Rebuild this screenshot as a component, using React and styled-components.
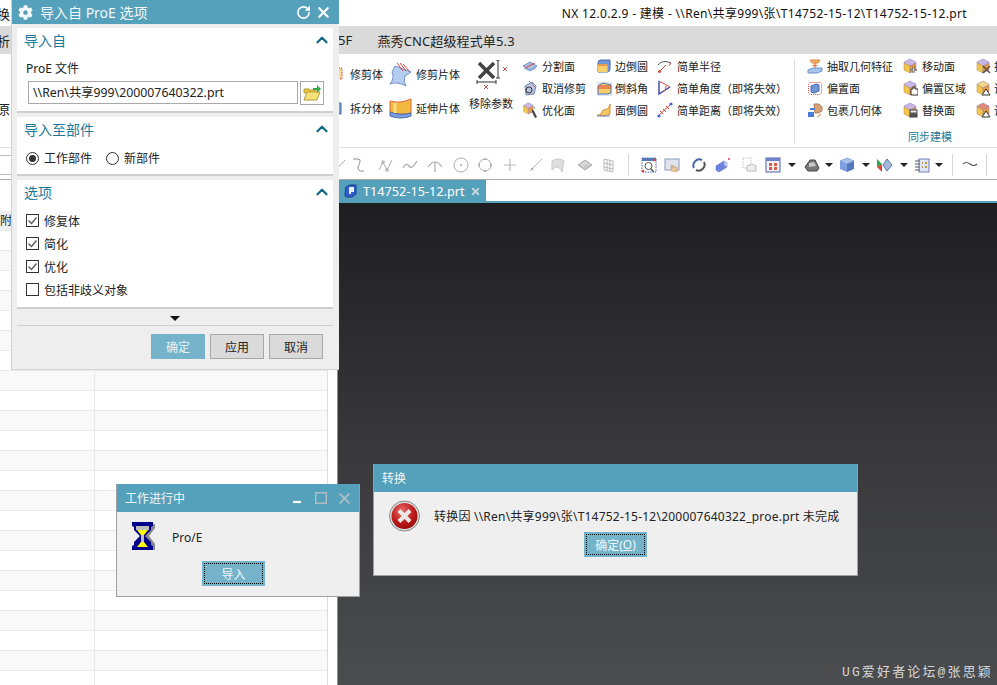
import React from "react";
import styled, { createGlobalStyle } from "styled-components";
import { ChevronUp, RotateCw, X } from "lucide-react";
import { FaCog } from "react-icons/fa";

const Global = createGlobalStyle`
  html, body { margin: 0; padding: 0; overflow: hidden; background: #fff; }
  * { box-sizing: border-box; }
  body { font-family: "Noto Sans", "Noto Sans CJK SC", sans-serif; color: #222; font-size: 12px; }
`;

const Screen = styled.div`
  position: relative; width: 997px; height: 685px; overflow: hidden; background: #fff;
  display: flex; flex-direction: column;
`;
const TitleBar = styled.div`
  height: 26px; display: flex; justify-content: space-between; align-items: center;
  padding-right: 30px; font-size: 12px; color: #111; white-space: nowrap; letter-spacing: .33px;
`;
const EdgeText = styled.span`margin-left: -3px; font-size: 13px;`;
const MenuBar = styled.div`
  height: 28px; background: #dadada; display: flex; align-items: center; font-size: 13px; white-space: nowrap;
`;
const MenuItem = styled.span`margin-left: ${p => p.$gap}px; letter-spacing: .12px;`;

const Ribbon = styled.div`
  height: 94px; display: flex; border-bottom: 1px solid #e0e0e0; font-size: 11px; white-space: nowrap; overflow: hidden;
`;
const RibbonColumn = styled.div`
  width: ${p => p.$w}px; flex: none; display: flex; flex-direction: column; padding-top: ${p => p.$top ?? 1}px;
`;
const RibbonItem = styled.div`
  height: ${p => p.$h ?? 22}px; display: flex; align-items: center; gap: ${p => p.$gap ?? 4}px; color: #222;
`;
const LargeTool = styled.div`
  width: 53px; flex: none; display: flex; flex-direction: column; align-items: flex-start; padding-top: 6px; gap: 5px;
`;
const LargeGlyph = styled.div`padding-left: 7px;`;
const SyncGroup = styled.div`
  flex: none; margin-top: 5px; height: 84px; border-left: 1px solid #dcdcdc; padding-left: 12px;
  display: flex; flex-direction: column;
`;
const SyncColumns = styled.div`display: flex; margin-top: -5px;`;
const GroupLabel = styled.div`
  color: #1b7a9c; font-size: 11px; padding-left: 101px; margin-top: 7px;
`;

const Toolbar = styled.div`
  height: 32px; display: flex; align-items: center; border-bottom: 1px solid #a8a8a8; padding-top: 2px;
`;
const EdgeCombo = styled.div`
  width: 11px; height: 20px; flex: none; border-top: 1px solid #bbb; border-bottom: 1px solid #bbb;
`;
const ToolIcon = styled.span`
  margin-left: ${p => p.$gap}px; width: 16px; height: 16px; flex: none; display: block; opacity: ${p => p.$dim ? 0.8 : 1};
`;
const ToolSep = styled.span`
  margin-left: ${p => p.$gap}px; width: 1px; height: 22px; flex: none; background: #d8d8d8;
`;
const DropArrow = styled.span`
  margin-left: ${p => p.$gap}px; flex: none; width: 8px; height: 4px;
  border-left: 4px solid transparent; border-right: 4px solid transparent; border-top: 4px solid #222;
`;

const Workspace = styled.div`flex: 1; display: flex; min-height: 0;`;
const LeftPane = styled.div`
  width: 338px; flex: none; border-right: 1px solid #8f8f8f; padding-top: 31px; overflow: hidden;
`;
const Table = styled.div`width: 328px; border-right: 1px solid #ddd;`;
const Row = styled.div`
  height: 20px; display: grid; grid-template-columns: 95px 1fr; border-bottom: 1px solid #e9e9e9;
  background: ${p => p.$head ? "#efefef" : p.$alt ? "#f9f9f9" : "#fff"};
`;
const Cell = styled.div`
  border-right: 1px solid #e9e9e9; font-size: 12px; line-height: 19px;
  &:last-child { border-right: 0; }
`;
const ViewColumn = styled.div`flex: 1; display: flex; flex-direction: column; min-width: 0;`;
const TabStrip = styled.div`height: 23px; display: flex; border-bottom: 2px solid #55a0ba;`;
const DocTab = styled.div`
  width: 148px; height: 22px; background: #55a0ba; color: #fff; display: flex; align-items: center;
  padding-left: 6px; font-size: 12.7px; gap: 5px; white-space: nowrap;
`;
const TabClose = styled(X)`color: #c4d8df;`;
const Viewport = styled.div`
  position: relative; flex: 1;
  background: linear-gradient(180deg, #1e1e20 0%, #39393b 52%, #4b4c4e 100%);
`;
const Watermark = styled.div`
  position: absolute; right: 4px; bottom: 5px; color: #d6d6d6; font-size: 13px; letter-spacing: 2.15px;
  font-family: "Liberation Mono", "Noto Sans CJK SC", monospace; white-space: nowrap;
`;

const OptionsDialog = styled.div`
  position: absolute; left: 11px; top: 0; width: 328px; height: 370px; background: #eee;
  border-bottom: 1px solid #d4d4d4; border-left: 1px solid #d4d4d4; display: flex; flex-direction: column;
`;
const TealHeader = styled.div`
  height: ${p => p.$h}px; flex: none; background: #55a0ba; color: #f2f8fa; display: flex; align-items: center;
  font-size: ${p => p.$size}px; padding: 0 ${p => p.$pr ?? 8}px 0 ${p => p.$pl}px; white-space: nowrap;
`;
const HeaderTitle = styled.span`margin-left: ${p => p.$gap ?? 0}px; flex: 1;`;
const HeaderBtn = styled.span`
  display: flex; margin-left: ${p => p.$gap ?? 0}px; color: ${p => p.$color ?? "#fff"};
`;
const DialogBody = styled.div`padding: 4px 6px 0 5px; display: flex; flex-direction: column; gap: 4px;`;
const Panel = styled.section`
  height: ${p => p.$h}px; background: #fff; border-bottom: 2px solid #cfcfcf; padding: 0 9px;
`;
const PanelHead = styled.div`
  height: 26px; margin: 0 -9px 0 -2px; padding: 0 2px 2px 0; display: flex; align-items: center; justify-content: space-between;
  color: #1b7a9c; font-size: 14px;
`;
const FieldLabel = styled.div`height: 16px; line-height: 16px; margin-top: 7px; font-size: 12px;`;
const FileRow = styled.div`display: flex; gap: 2px; margin: 4px 0 0 2px;`;
const FileInput = styled.div`
  width: 270px; height: 23px; border: 1px solid #a8a8a8; padding-left: 4px; line-height: 21px; font-size: 12.3px; white-space: nowrap;
`;
const BrowseBtn = styled.div`
  width: 24px; height: 24px; border: 1px solid #a8a8a8; display: flex; align-items: center; justify-content: center;
`;
const RadioRow = styled.div`display: flex; align-items: center; margin-top: 7px; height: 16px;`;
const Radio = styled.span`
  width: 13px; height: 13px; border: 1px solid #333; border-radius: 50%; flex: none; margin-left: ${p => p.$gap ?? 0}px;
  display: flex; align-items: center; justify-content: center;
  &::after { content: ""; width: 7px; height: 7px; border-radius: 50%; background: ${p => p.$on ? "#333" : "transparent"}; }
`;
const OptionLabel = styled.span`margin-left: 5px; font-size: 12px;`;
const CheckList = styled.div`margin-top: 3px;`;
const CheckRow = styled.div`height: 23px; display: flex; align-items: center;`;
const CheckBox = styled.span`
  width: 13px; height: 13px; border: 1px solid #333; flex: none; display: flex; align-items: center; justify-content: center;
`;
const ExpandRow = styled.div`
  height: 17px; margin: -4px 0 0; display: flex; align-items: center; justify-content: center;
  border-bottom: 1px solid #cfcfcf; padding-top: 2px;
  &::before { content: ""; width: 0; height: 0; border-left: 5px solid transparent; border-right: 5px solid transparent; border-top: 5px solid #111; }
`;
const Buttons = styled.div`display: flex; justify-content: flex-end; gap: 5px; padding: 4px 10px 0 0;`;
const Btn = styled.div`
  width: 54px; height: 25px; display: flex; align-items: center; justify-content: center; font-size: 12px;
  background: ${p => p.$primary ? "#74b3c9" : "#dadada"};
  color: ${p => p.$primary ? "#e6f3f7" : "#222"};
  border: ${p => p.$primary ? "0" : "1px solid #a8a8a8"};
`;

const MessageWindow = styled.div`
  position: absolute; left: ${p => p.$x}px; top: ${p => p.$y}px; width: ${p => p.$w}px; height: ${p => p.$h}px;
  background: #efefef; border: 1px solid #a0a0a0; border-top: 0; display: flex; flex-direction: column;
`;
const MessageRow = styled.div`
  display: flex; align-items: center; gap: ${p => p.$gap}px; padding: ${p => p.$top}px 0 0 ${p => p.$left}px; font-size: 12px; white-space: nowrap;
`;
const MessageText = styled.span`letter-spacing: ${p => p.$track ?? 0}px;`;
const FocusBtn = styled.div`
  width: 63px; height: 25px; background: #74b3c9; color: #eef7fa; font-size: 12px; display: flex; align-items: center; justify-content: center;
  outline: 1px dotted #000; outline-offset: -3px; margin: ${p => p.$mt}px 0 0 ${p => p.$ml}px; ${p => p.$center && "align-self: center; margin-left: 0;"}
`;
const Underlined = styled.span`text-decoration: underline;`;
const Glyph = styled.svg`display: block; flex: none;`;

const Svg = ({ s = 16, w, h, vb = "0 0 16 16", children }) => (
  <Glyph width={w ?? s} height={h ?? s} viewBox={vb} fill="none">{children}</Glyph>
);

const Cube = ({ t = "#c9b8e6", l = "#f3c64e", r = "#e89a3c" }) => (
  <>
    <path d="M8 1l6 3v1L8 8 2 5V4z" fill={t} stroke="#8f78b8" strokeWidth=".5" />
    <path d="M2 5l6 3v7l-6-3z" fill={l} stroke="#b8863a" strokeWidth=".5" />
    <path d="M14 5L8 8v7l6-3z" fill={r} stroke="#8f78b8" strokeWidth=".5" />
  </>
);

const glyphs = {
  split: <><path d="M1 8l7-4 7 4-7 4z" fill="#a9bfe4" stroke="#6f8fc8" /><path d="M2 10l6 3 6-3" stroke="#7d97cc" /><path d="M3 10L13 5" stroke="#e0453a" /></>,
  untrim: <><path d="M3 6l7-4 4 4-2 8-8 1z" fill="#b9c6e0" stroke="#6f86b8" /><path d="M7 1l6 6" stroke="#d9453a" strokeDasharray="1.5 1" /><circle cx="7" cy="10" r="3" stroke="#333" /></>,
  optimize: <><g transform="scale(.8)"><Cube /></g><path d="M10 7l2 2 3 6-2 1-3-6z" fill="#444" /><path d="M12 5l1 2" stroke="#999" /></>,
  edgeBlend: <><path d="M2 5q0-3 3-3h9v9q0 3-3 3H2z" fill="#6f97d8" stroke="#4a68a8" /><path d="M2 6h10v8H2z" fill="#f4cf6a" /><path d="M2 7h10" stroke="#e0603a" /><path d="M12 5v9" stroke="#7da0da" /></>,
  chamfer: <><rect x="1" y="2" width="15" height="14" fill="#dfe6f3" /><path d="M2 6l5-3 8 2v8l-4 1H2z" fill="#f4cf6a" stroke="#5577b5" /><path d="M2 6h13M2 8h13" stroke="#d9453a" /></>,
  faceBlend: <><path d="M1 13l8 1 5-2V2q-1 6-7 6l-3 5z" fill="#f3c864" stroke="#d98a3a" /><path d="M1 14h13" stroke="#6f8fc8" /></>,
  radius: <><path d="M1 7Q6 1 14 5" stroke="#555" /><path d="M2 14l7-7" stroke="#d9453a" /><circle cx="2.5" cy="13.5" r="1.5" fill="#d9453a" /><path d="M14 5l-2 3" stroke="#d9453a" /></>,
  angle: <><path d="M2 1v13L13 7" stroke="#3a3fa8" strokeWidth="1.4" /><path d="M7 11q2-1 2-5" stroke="#d9453a" /><path d="M2 1l11 6" stroke="#d9453a" /></>,
  distance: <><path d="M1 14L14 2" stroke="#d9453a" /><path d="M3 9l3 3M6 7l3 3M9 4l3 3" stroke="#d9453a" /><circle cx="2" cy="14" r="1.6" fill="#4a68c8" /><circle cx="14" cy="2" r="1.6" fill="#4a68c8" /></>,
  extract: <><path d="M3 2h10l-2 3H5z" fill="#f2b267" stroke="#d98a3a" /><path d="M8 5v5M5.5 7.5h5" stroke="#e0603a" /><path d="M1 12l5-2h9v3l-5 2H1z" fill="#a9c4ea" stroke="#6f8fc8" /></>,
  offset: <><rect x="1.5" y="2.5" width="13" height="12" rx="2" stroke="#d9453a" strokeDasharray="1 1" /><path d="M4 6l5-2 3 1v6l-5 2-3-1z" fill="#6f97d8" stroke="#4a68a8" /></>,
  wrap: <><path d="M7 2h5l3 3v4l-4 2H8z" fill="#d8a178" stroke="#b8785a" /><path d="M1 10h6v5H1z" fill="#4d7bd8" /><path d="M3 7h5" stroke="#4d7bd8" strokeWidth="2" /><path d="M10 15l4-3" stroke="#e0763a" /></>,
  move: <><Cube /><path d="M8 12h7M11.5 8v7" stroke="#555" strokeWidth="2" /><path d="M8 12h7M11.5 8v7" stroke="#eee" strokeWidth=".7" /></>,
  region: <><Cube /><path d="M9 15V9h2V7h2v2h3v6z" fill="#fff" stroke="#333" /></>,
  replace: <><Cube /><rect x="8" y="8" width="7" height="3" fill="#eee" stroke="#444" /><rect x="8" y="12" width="7" height="3" fill="#555" stroke="#444" /></>,
  sync1: <><Cube /><path d="M8 8l7 7M15 8l-7 7" stroke="#555" strokeWidth="1.5" /></>,
  sync2: <><Cube t="#f2d780" /><path d="M11 9l4 6H7z" fill="#fff" stroke="#333" /></>,
  sync3: <><Cube t="#e08a7a" /><path d="M11 9l4 6H7z" fill="#fff" stroke="#333" /></>,
  trim: <><rect x="1" y="2" width="11" height="11" fill="#f7dc98" stroke="#d9453a" strokeDasharray="1.5 1" /></>,
  splitBody: <><path d="M1 3h10v11H5q-4 0-4-4z" fill="#7c9ee2" stroke="#4a68a8" /></>,
  c1: <path d="M3 14L13 3" stroke="#999" />,
  c2: <path d="M3 2h5q3 0 2 3T8 10t2 4h4" stroke="#777" />,
  c3: <><path d="M1 13L5 5l4 8 5-10" stroke="#999" /><circle cx="5" cy="5" r="1.3" stroke="#999" /><circle cx="9" cy="13" r="1.3" stroke="#999" /></>,
  c4: <path d="M1 11q3-6 6-2t8-5" stroke="#999" strokeWidth="1.3" />,
  c5: <path d="M1 10Q8 0 15 10M8 5v10" stroke="#999" strokeWidth="1.2" />,
  c6: <><circle cx="8" cy="8" r="7" stroke="#999" /><circle cx="8" cy="8" r="1" fill="#999" /></>,
  c7: <><circle cx="8" cy="8" r="6" stroke="#999" /><path d="M8 1v2M8 13v2M1 8h2M13 8h2" stroke="#777" /></>,
  c8: <path d="M8 2v12M2 8h12" stroke="#aaa" strokeWidth="1.2" />,
  c9: <><path d="M2 14L14 2" stroke="#aaa" /><circle cx="4" cy="12" r="1.2" fill="#999" /></>,
  c10: <path d="M2 4q6-4 12 0l-2 11q-1-5-7-5l-3 3z" fill="#d8d8d8" stroke="#bbb" />,
  c11: <><path d="M1 8l7-5 7 5-7 5z" fill="#b8b8b8" stroke="#999" /><path d="M4 8l4-3 4 3M5 10l4-3" stroke="#eee" /></>,
  c12: <path d="M3 2l9 2v11l-9-2zM6 3v11M9 3.500v11M3 6l9 2M3 10l9 2" stroke="#aaa" />,
  view: <><rect x="1" y="1" width="14" height="14" stroke="#4a68c8" strokeDasharray="1.5 1" /><path d="M1 1h14v3H1z" fill="#5577b5" /><circle cx="7.500" cy="9" r="3.500" stroke="#555" /><path d="M10 12l3 3" stroke="#555" strokeWidth="1.5" /><circle cx="14" cy="3" r="1.300" fill="#d9453a" /><circle cx="2" cy="14" r="1.300" fill="#d9453a" /></>,
  pan: <><rect x="1" y="2" width="14" height="11" fill="#dfe4ee" stroke="#8a9ab8" /><path d="M7 14V8h1v3l1-3 1 3 1-2 1 2 1-1v5z" fill="#e8c49a" stroke="#c89a6a" strokeWidth=".5" /></>,
  rotate: <><path d="M3 11A6 6 0 0 1 11 3" stroke="#4a68a8" strokeWidth="2" /><path d="M13 5a6 6 0 0 1-8 8" stroke="#555" strokeWidth="2" /></>,
  spot: <><path d="M1 9l8-5 3 2v4l-8 5-3-2z" fill="#6f82e0" stroke="#4a58b8" strokeWidth=".5" /><path d="M9 4l3 2v4l-3-2z" fill="#b8c8ee" /><circle cx="14" cy="2" r="1" fill="#d9453a" /></>,
  layers: <><rect x="2" y="1" width="8" height="10" stroke="#bbb" strokeDasharray="1 1" /><path d="M6 9l5-2 4 2v5H6z" fill="#eee" stroke="#bbb" /></>,
  grid: <><rect x="1" y="1" width="14" height="14" fill="#f3f3f8" stroke="#5060a8" /><path d="M1 1h14v3H1z" fill="#6f82c8" /><path d="M4 6h3v3H4zM9 6h3v3H9zM4 10h3v3H4zM9 10h3v3H9z" fill="#e0584a" /></>,
  scanner: <><path d="M1 10l5-7h5l4 8-2 3H4z" fill="#777" stroke="#444" /><path d="M5 6l5-1 2 4-7 1z" fill="#c8c8c8" /></>,
  solid: <><path d="M1 4l7-3 7 3-7 3z" fill="#a8c0ec" stroke="#5577b5" strokeWidth=".5" /><path d="M1 4l7 3v8l-7-3z" fill="#7c9ee2" /><path d="M15 4L8 7v8l7-3z" fill="#5577c0" /></>,
  snap: <><path d="M1 2l5 5-5 3z" fill="#2aa84a" /><path d="M1 10l5-3v8z" fill="#d9453a" /><path d="M7 8l4-6 5 6-5 6z" fill="#a8b8d8" stroke="#5577b5" /></>,
  notes: <><rect x="5" y="2" width="10" height="13" fill="#dfe4f6" stroke="#7080c0" /><path d="M1 4h5M1 7h5M1 10h5M1 13h5" stroke="#555" /><path d="M8 6h1M11 6h2M8 10h1M11 10h2" stroke="#b89a3a" strokeWidth="2" /></>,
  wave: <path d="M1 7q3-3 7 0t7 0" stroke="#555" strokeWidth="1.2" />,
};
const Icon = ({ n }) => <Svg>{glyphs[n]}</Svg>;

const TrimSheetIcon = () => (
  <Svg w={23} h={25} vb="0 0 23 25">
    <path d="M6 4l16 6-6 4q-2 6 1 10Q8 19 1 22q5-6 2-12z" fill="#b4cdf0" stroke="#6f8fc8" />
    <path d="M8 1l6 8M11 1l6 8M14 2l6 7" stroke="#d9453a" />
  </Svg>
);
const ExtendSheetIcon = () => (
  <Svg w={23} h={21} vb="0 0 23 21">
    <path d="M1 3q10 3 21-2v14Q12 18 1 14z" fill="#f3b93e" stroke="#d9653a" />
    <path d="M1 14q11 4 21 1v3Q12 22 1 18z" fill="#7c9ee2" stroke="#4a68a8" />
    <path d="M6 5v10" stroke="#f8dd8a" strokeWidth="3" />
  </Svg>
);
const RemoveParamIcon = () => (
  <Svg w={34} h={30} vb="0 0 34 30">
    <path d="M3 3l15 15M18 3L3 18" stroke="#444" strokeWidth="3.6" />
    <path d="M20 0h4M22 0v18M20 18h4" stroke="#333" />
    <path d="M1 20v4M1 22h19M20 20v4" stroke="#333" />
    <path d="M27 7l4 4M31 7l-4 4M8 25l4 4M12 25l-4 4" stroke="#c0504a" />
  </Svg>
);
const FolderIcon = () => (
  <Svg w={18} h={17} vb="0 0 18 17">
    <path d="M1 4h5l1 1h6v3H1z" fill="#e8c840" stroke="#b89a3a" />
    <path d="M1 15l3-8h13l-3 8z" fill="#f6e07a" stroke="#b89a3a" />
    <path d="M10 3h4V0l4 4-4 4V5h-4z" fill="#36a84a" />
  </Svg>
);
const CheckMark = () => (
  <Svg s={11} vb="0 0 11 11"><path d="M1.500 5.500l3 3 5-6" stroke="#555" strokeWidth="1.300" /></Svg>
);
const TabCube = () => (
  <Svg s={14} vb="0 0 14 14">
    <path d="M2 3l4-2h6v9l-4 3H3q-2 0-2-2z" fill="#2f5fd0" stroke="#1a3a90" />
    <path d="M5 3h5v5H7v2H5z" fill="#e8eef9" />
  </Svg>
);
const Hourglass = () => (
  <Svg w={25} h={32} vb="0 0 25 32">
    <path d="M3 3h21v4l-6 8 6 8v6H3v-6l6-8-6-8z" fill="#8a8a8a" />
    <path d="M1 1h21v4l-2 1v3l-6 6 6 6v3l2 1v4H1v-4l2-1v-3l6-6-6-6V6L1 5z" fill="#00008a" />
    <path d="M5 5h13v4H5z" fill="#bdbdbd" />
    <path d="M6 9h11l-4 5h-3zM10 21h3l4 5H6z" fill="#ffff00" />
    <path d="M10 14h3v7h-3z" fill="#bdbdbd" />
  </Svg>
);
const ErrorIcon = () => (
  <Svg w={31} h={32} vb="0 0 31 32">
    <defs>
      <radialGradient id="er" cx=".4" cy=".3" r=".8">
        <stop offset="0" stopColor="#e86a6a" /><stop offset=".55" stopColor="#c01c1c" /><stop offset="1" stopColor="#8c0505" />
      </radialGradient>
    </defs>
    <circle cx="15.500" cy="16" r="15" fill="#ddd" stroke="#888" />
    <circle cx="15.500" cy="16" r="13" fill="url(#er)" />
    <path d="M10 10.500l11 11M21 10.500l-11 11" stroke="#e8e8e8" strokeWidth="4" />
  </Svg>
);
const WindowMin = () => (
  <Svg w={8} h={12} vb="0 0 8 12"><path d="M0 10h8" stroke="#fff" strokeWidth="2.200" /></Svg>
);
const WindowMax = () => (
  <Svg w={12} h={12} vb="0 0 12 12"><path d="M.7.7h10.600v10.600H.7z" stroke="#aebfc6" strokeWidth="1.400" /></Svg>
);
const WindowClose = () => (
  <Svg w={11} h={11} vb="0 0 11 11"><path d="M.5.5l10 10M10.500.5l-10 10" stroke="#aebfc6" strokeWidth="1.800" /></Svg>
);

const Item = ({ i, children, h, gap }) => (
  <RibbonItem $h={h} $gap={gap}>{i}{children}</RibbonItem>
);

const toolbar = [
  ["i", "c1", 321, 1], ["i", "c2", 2, 1], ["i", "c3", 12, 1], ["i", "c4", 8, 1], ["i", "c5", 9, 1], ["i", "c6", 10, 1],
  ["i", "c7", 8, 1], ["i", "c8", 9, 1], ["i", "c9", 10, 1], ["i", "c10", 6, 1], ["i", "c11", 11, 1], ["i", "c12", 8, 1],
  ["s", "", 11], ["i", "view", 12], ["i", "pan", 7], ["i", "rotate", 11], ["i", "spot", 8], ["i", "layers", 10], ["i", "grid", 8],
  ["a", "", 7], ["i", "scanner", 8], ["a", "", 5], ["i", "solid", 6], ["a", "", 7], ["i", "snap", 6], ["a", "", 8],
  ["i", "notes", 6], ["a", "", 5], ["s", "", 9], ["i", "wave", 9], ["s", "", 8],
];

const rows = Array.from({ length: 23 }, (_, k) => k);

export default function App() {
  return (
    <Screen>
      <Global />
      <TitleBar>
        <EdgeText>换</EdgeText>
        <span>NX 12.0.2.9 - 建模 - \\Ren\共享999\张\T14752-15-12\T14752-15-12.prt</span>
      </TitleBar>
      <MenuBar>
        <EdgeText>析</EdgeText>
        <MenuItem $gap={328}>5F</MenuItem>
        <MenuItem $gap={25}>燕秀CNC超级程式单5.3</MenuItem>
      </MenuBar>

      <Ribbon>
        <RibbonColumn $w={330} $top={45}><EdgeText>原</EdgeText></RibbonColumn>
        <RibbonColumn $w={59} $top={3}>
          <Item h={34} i={<Icon n="trim" />}>修剪体</Item>
          <Item h={34} i={<Icon n="splitBody" />}>拆分体</Item>
        </RibbonColumn>
        <RibbonColumn $w={80} $top={3}>
          <Item h={34} i={<TrimSheetIcon />} gap={4}>修剪片体</Item>
          <Item h={34} i={<ExtendSheetIcon />} gap={4}>延伸片体</Item>
        </RibbonColumn>
        <LargeTool>
          <LargeGlyph><RemoveParamIcon /></LargeGlyph>
          <span>移除参数</span>
        </LargeTool>
        <RibbonColumn $w={74}>
          <Item i={<Icon n="split" />}>分割面</Item>
          <Item i={<Icon n="untrim" />}>取消修剪</Item>
          <Item i={<Icon n="optimize" />}>优化面</Item>
        </RibbonColumn>
        <RibbonColumn $w={61}>
          <Item i={<Icon n="edgeBlend" />} gap={3}>边倒圆</Item>
          <Item i={<Icon n="chamfer" />} gap={3}>倒斜角</Item>
          <Item i={<Icon n="faceBlend" />} gap={3}>面倒圆</Item>
        </RibbonColumn>
        <RibbonColumn $w={137}>
          <Item i={<Icon n="radius" />}>简单半径</Item>
          <Item i={<Icon n="angle" />}>简单角度（即将失效）</Item>
          <Item i={<Icon n="distance" />}>简单距离（即将失效）</Item>
        </RibbonColumn>
        <SyncGroup>
          <SyncColumns>
            <RibbonColumn $w={95}>
              <Item i={<Icon n="extract" />}>抽取几何特征</Item>
              <Item i={<Icon n="offset" />}>偏置面</Item>
              <Item i={<Icon n="wrap" />}>包裹几何体</Item>
            </RibbonColumn>
            <RibbonColumn $w={73}>
              <Item i={<Icon n="move" />}>移动面</Item>
              <Item i={<Icon n="region" />}>偏置区域</Item>
              <Item i={<Icon n="replace" />}>替换面</Item>
            </RibbonColumn>
            <RibbonColumn $w={40}>
              <Item i={<Icon n="sync1" />} gap={3}>拉</Item>
              <Item i={<Icon n="sync2" />} gap={3}>调</Item>
              <Item i={<Icon n="sync3" />} gap={3}>调</Item>
            </RibbonColumn>
          </SyncColumns>
          <GroupLabel>同步建模</GroupLabel>
        </SyncGroup>
      </Ribbon>

      <Toolbar>
        <EdgeCombo />
        {toolbar.map(([kind, name, gap, dim], k) =>
          kind === "i" ? <ToolIcon key={k} $gap={gap} $dim={dim}><Icon n={name} /></ToolIcon>
            : kind === "s" ? <ToolSep key={k} $gap={gap} />
            : <DropArrow key={k} $gap={gap} />
        )}
      </Toolbar>

      <Workspace>
        <LeftPane>
          <Table>
            <Row $head><Cell>附</Cell><Cell /></Row>
            {rows.map(k => (
              <Row key={k} $alt={k % 2 === 1}><Cell /><Cell /></Row>
            ))}
          </Table>
        </LeftPane>
        <ViewColumn>
          <TabStrip>
            <DocTab>
              <TabCube />
              <span>T14752-15-12.prt</span>
              <TabClose size={11} strokeWidth={4} />
            </DocTab>
          </TabStrip>
          <Viewport>
            <Watermark>UG爱好者论坛@张思颖</Watermark>
          </Viewport>
        </ViewColumn>
      </Workspace>

      <OptionsDialog>
        <TealHeader $h={24} $size={14} $pl={6} $pr={7}>
          <FaCog size={15} />
          <HeaderTitle $gap={7}>导入自 ProE 选项</HeaderTitle>
          <HeaderBtn><RotateCw size={15} strokeWidth={2.6} /></HeaderBtn>
          <HeaderBtn $gap={4}><X size={17} strokeWidth={3} /></HeaderBtn>
        </TealHeader>
        <DialogBody>
          <Panel $h={85}>
            <PanelHead>导入自<ChevronUp size={18} strokeWidth={3} color="#0f6a88" /></PanelHead>
            <FieldLabel>ProE 文件</FieldLabel>
            <FileRow>
              <FileInput>\\Ren\共享999\200007640322.prt</FileInput>
              <BrowseBtn><FolderIcon /></BrowseBtn>
            </FileRow>
          </Panel>
          <Panel $h={59}>
            <PanelHead>导入至部件<ChevronUp size={18} strokeWidth={3} color="#0f6a88" /></PanelHead>
            <RadioRow>
              <Radio $on /><OptionLabel>工作部件</OptionLabel>
              <Radio $gap={14} /><OptionLabel>新部件</OptionLabel>
            </RadioRow>
          </Panel>
          <Panel $h={129}>
            <PanelHead>选项<ChevronUp size={18} strokeWidth={3} color="#0f6a88" /></PanelHead>
            <CheckList>
              <CheckRow><CheckBox><CheckMark /></CheckBox><OptionLabel>修复体</OptionLabel></CheckRow>
              <CheckRow><CheckBox><CheckMark /></CheckBox><OptionLabel>简化</OptionLabel></CheckRow>
              <CheckRow><CheckBox><CheckMark /></CheckBox><OptionLabel>优化</OptionLabel></CheckRow>
              <CheckRow><CheckBox /><OptionLabel>包括非歧义对象</OptionLabel></CheckRow>
            </CheckList>
          </Panel>
          <ExpandRow />
          <Buttons>
            <Btn $primary>确定</Btn>
            <Btn>应用</Btn>
            <Btn>取消</Btn>
          </Buttons>
        </DialogBody>
      </OptionsDialog>

      <MessageWindow $x={116} $y={484} $w={244} $h={113}>
        <TealHeader $h={28} $size={12} $pl={8} $pr={9}>
          <HeaderTitle>工作进行中</HeaderTitle>
          <HeaderBtn><WindowMin /></HeaderBtn>
          <HeaderBtn $gap={14}><WindowMax /></HeaderBtn>
          <HeaderBtn $gap={12}><WindowClose /></HeaderBtn>
        </TealHeader>
        <MessageRow $gap={16} $left={14} $top={9}>
          <Hourglass />
          <span>Pro/E</span>
        </MessageRow>
        <FocusBtn $mt={8} $ml={85}>导入</FocusBtn>
      </MessageWindow>

      <MessageWindow $x={373} $y={464} $w={485} $h={112}>
        <TealHeader $h={28} $size={12} $pl={8}>
          <HeaderTitle>转换</HeaderTitle>
        </TealHeader>
        <MessageRow $gap={14} $left={15} $top={8}>
          <ErrorIcon />
          <MessageText $track={0.22}>转换因 \\Ren\共享999\张\T14752-15-12\200007640322_proe.prt 未完成</MessageText>
        </MessageRow>
        <FocusBtn $mt={9} $center>确定(<Underlined>O</Underlined>)</FocusBtn>
      </MessageWindow>
    </Screen>
  );
}
